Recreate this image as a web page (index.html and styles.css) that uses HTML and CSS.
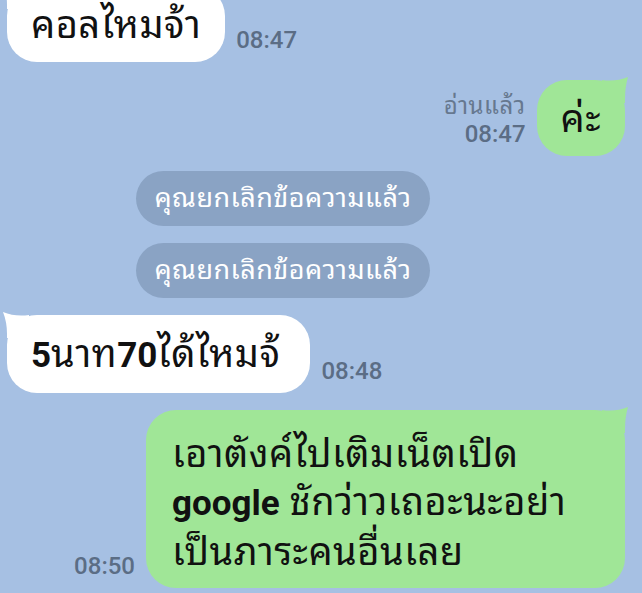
FILE: index.html
```html
<!DOCTYPE html>
<html lang="th">
<head>
<meta charset="utf-8">
<title>Chat</title>
<link rel="stylesheet" href="styles.css">
</head>
<body>
<div class="chat">
  <div class="row in first">
    <div class="bubble recv">คอลไหมจ้า</div>
    <div class="time">08:47</div>
  </div>
  <div class="row out r2">
    <div class="meta">
      <div class="read">อ่านแล้ว</div>
      <div class="time">08:47</div>
    </div>
    <div class="bubble sent short">ค่ะ</div>
  </div>
  <div class="sys s1">คุณยกเลิกข้อความแล้ว</div>
  <div class="sys s2">คุณยกเลิกข้อความแล้ว</div>
  <div class="row in r5">
    <div class="bubble recv wide">
      <span class="lat">5</span>นาท<span class="lat">70</span>ได้ไหมจ้
    </div>
    <div class="time">08:48</div>
  </div>
  <div class="row out r6">
    <div class="time">08:50</div>
    <div class="bubble sent long">เอาตังค์ไปเติมเน็ตเปิด<br><span class="lat">google</span> ชักว่าวเถอะนะอย่า<br>เป็นภาระคนอื่นเลย</div>
  </div>
</div>
</body>
</html>
```
FILE: styles.css
```css
html, body {
  margin: 0;
  padding: 0;
}
body {
  width: 642px;
  height: 593px;
  overflow: hidden;
  background: #a6c0e3;
  font-family: Roboto, "Noto Sans Thai Looped", "Noto Sans Thai", "Noto Sans", sans-serif;
  color: #111;
}
.chat {
  display: flex;
  flex-direction: column;
}
.row {
  display: flex;
  align-items: flex-end;
}
.row.in {
  padding-left: 7px;
}
.row.out {
  justify-content: flex-end;
  padding-right: 17px;
}
.first { margin-top: -14px; }
.r2 { margin-top: 18px; }
.s1 { margin-top: 15px; }
.s2 { margin-top: 17px; }
.r5 { margin-top: 17px; }
.r6 { margin-top: 17px; }

.bubble {
  position: relative;
  font-size: 38px;
  letter-spacing: 0.5px;
  line-height: 48px;
  padding: 15px 24px 13px;
  border-radius: 30px;
  white-space: nowrap;
}
.recv {
  background: #ffffff;
}
.sent {
  background: #a0e697;
}
.recv::before,
.sent::before {
  content: "";
  position: absolute;
  top: -3px;
  width: 26px;
  height: 26px;
  background: inherit;
}
.recv::before {
  left: -4px;
  clip-path: path("M0 0 Q 12 5 26 3 L 26 26 L 4 26 L 4 22 Q 4 10 0 0 Z");
}
.sent::before {
  right: -3px;
  clip-path: path("M26 0 Q 14 5 0 3 L 0 26 L 23 26 L 23 22 Q 23 10 26 0 Z");
}
.short {
  min-width: 87px;
  box-sizing: border-box;
  text-align: center;
}
.wide {
  padding-right: 30px;
}
.long {
  width: 479px;
  box-sizing: border-box;
  padding: 20px 24px 12px 26px;
}
.lat {
  font-size: 35px;
  font-weight: 700;
  letter-spacing: 0;
}
.time {
  font-size: 24px;
  line-height: 24px;
  font-weight: 500;
  color: #5b6d85;
  margin: 0 11px 10px;
}
.meta {
  display: flex;
  flex-direction: column;
  align-items: flex-end;
  margin: 0 11px 10px 0;
}
.meta .time {
  margin: 0;
}
.read {
  font-size: 24px;
  letter-spacing: 0.5px;
  line-height: 32px;
  color: #66788f;
}
.sys {
  align-self: flex-start;
  margin-left: 136px;
  width: 294px;
  box-sizing: border-box;
  height: 55px;
  line-height: 55px;
  text-align: center;
  border-radius: 28px;
  background: #8aa3c4;
  color: #ffffff;
  font-size: 27px;
  letter-spacing: 0.5px;
}
```
